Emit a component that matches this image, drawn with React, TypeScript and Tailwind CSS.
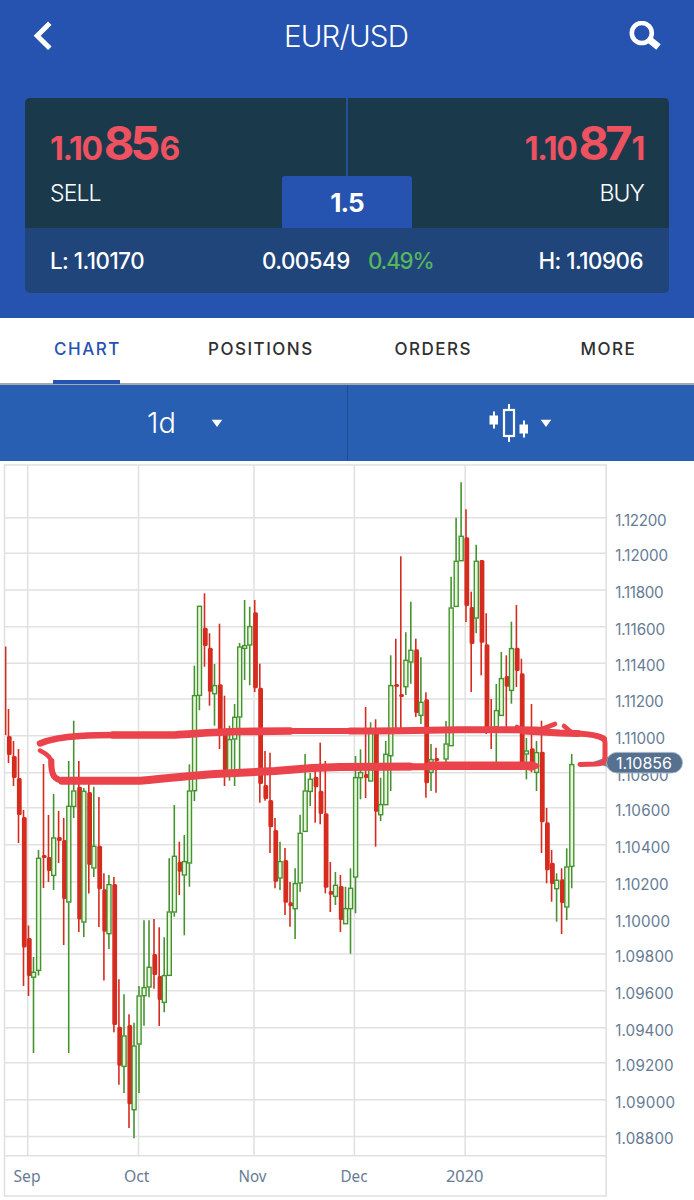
import React from "react";

type Candle = [x: number, high: number, top: number, bottom: number, low: number, up: 0 | 1];

const candles: Candle[] = [
  [8.5, 709, 736, 755, 763, 0], [13.5, 741, 756, 778, 786, 0], [18.5, 749, 778, 815, 843, 0],
  [23.5, 810, 817, 947.5, 986, 0], [28.5, 925.5, 938, 976, 996, 0], [33.5, 957, 972, 977.5, 1053, 1],
  [38.5, 850, 858, 970.7, 975.5, 1], [43.5, 764, 855, 858, 888, 0], [48.5, 815, 857, 871, 882, 0],
  [53.6, 794, 837.7, 875.7, 890, 1], [58.6, 811, 837, 841, 863, 0], [63.7, 818, 840, 899, 945, 0],
  [68.7, 761, 806, 902.3, 1053, 1], [73.7, 720.7, 790.7, 806.7, 818, 1], [78.8, 761, 786.7, 919.5, 932, 0],
  [83.8, 788, 791, 922.3, 937, 1], [88.8, 783, 792, 865, 893.5, 0], [93.8, 786.7, 846, 868.3, 877, 1],
  [98.9, 797, 845.7, 889.3, 927, 0], [103.9, 873.3, 889.3, 931.7, 980.5, 0], [108.9, 875, 884.3, 934, 949, 1],
  [113.9, 877, 884, 1025, 1032.3, 0], [118.9, 979.3, 1026.7, 1065.7, 1084.7, 0], [124, 994.3, 1035.7, 1066.7, 1093, 1],
  [129, 1014.3, 1025, 1104.3, 1128, 0], [134, 1022.7, 1045.7, 1110, 1138.3, 1], [139, 986, 995.7, 1044.3, 1093, 1],
  [144, 920.3, 987.3, 996, 1025.7, 1], [149, 920.3, 967, 987.3, 997.3, 1], [154, 919, 954, 975, 988.7, 0],
  [159.2, 927.3, 976, 1000, 1026, 0], [164.2, 937.3, 975.3, 1002.7, 1012.3, 1], [169.2, 858.3, 911.7, 975.7, 976, 1],
  [174.3, 805, 856, 912.3, 916.7, 1], [179.3, 841.7, 861.7, 871.7, 895, 0], [184.3, 835, 861.3, 875.3, 935.3, 1],
  [189.4, 764.3, 790.7, 863.3, 886.7, 1], [194.4, 665.7, 695.3, 791, 801, 1], [199.4, 606, 606, 695.7, 710.3, 1],
  [204.5, 593.3, 627.7, 646, 666.7, 0], [209.5, 633.3, 647.7, 691.7, 705.7, 0], [214.5, 664, 685.3, 694, 725.7, 1],
  [219.5, 623.7, 684.3, 735, 749, 0], [224.5, 695.7, 732, 772, 786, 0], [229.5, 725.7, 739.3, 772, 780.7, 1],
  [234.6, 704, 717, 739.3, 786, 1], [239.6, 643, 646.7, 717.3, 772, 1], [244.6, 600, 645.3, 648.7, 680, 1],
  [249.7, 606.7, 626.3, 645.3, 685.3, 1], [254.7, 600, 612.3, 688.3, 692, 0], [259.8, 663.7, 687.7, 784, 802.7, 0],
  [265, 751, 785, 799, 800.7, 0], [270, 752.7, 800, 827.3, 853, 0], [275, 818, 830, 881.7, 888.3, 0],
  [280, 841.7, 861.3, 878.3, 890, 1], [285, 848, 860, 902.7, 915, 0], [290, 882, 902.3, 906.3, 926.7, 0],
  [295.1, 868.3, 883.3, 909, 939, 1], [300.1, 814.7, 833, 883.3, 891.7, 1], [305.1, 754, 790.7, 831.7, 832, 1],
  [310.2, 773, 779, 791.7, 806, 1], [315.2, 770, 776.7, 787.3, 822.7, 0], [320.2, 742.7, 790.7, 814, 824.3, 0],
  [325.3, 761, 813.3, 887.7, 893.3, 0], [330.3, 862, 891, 894.7, 912, 0], [335.4, 872, 885, 896.7, 905, 1],
  [340.4, 875, 886, 920, 932, 0], [345.5, 886.7, 908.3, 924, 924, 1], [350.5, 868.3, 888, 909, 953.7, 1],
  [355.5, 756, 777.3, 877.3, 913.3, 1], [360.5, 749.3, 772.3, 778, 799.3, 1], [365.6, 707, 774, 778, 798, 0],
  [370.6, 722.3, 733, 781.3, 781.3, 1], [375.6, 719.3, 731.7, 811.7, 846.7, 0], [380.6, 777.7, 804.3, 815, 821, 1],
  [385.7, 741, 754, 805, 805, 1], [390.7, 655.3, 685.3, 756, 791, 1], [395.8, 638.7, 684, 687, 728, 0],
  [400.8, 556.3, 694, 697, 730, 0], [405.8, 632.3, 660, 687, 695, 1], [410.8, 601.7, 650, 662.3, 683.7, 1],
  [415.8, 638.7, 649.3, 713, 717, 0], [420.9, 657.3, 702, 715.7, 724, 1], [425.9, 692.3, 699.3, 783.3, 797.7, 0],
  [431, 744, 759.3, 772.7, 791, 1], [436, 747.7, 758, 761, 792.7, 0], [446, 721, 743.7, 759.3, 765, 1],
  [451.1, 576.7, 607.7, 746, 746, 1], [456.1, 517.7, 561, 606.7, 606.7, 1], [461.1, 482.3, 536, 561, 561, 1],
  [466, 509.3, 537.3, 606, 622, 0], [471.2, 591.7, 607, 644, 692, 0], [476.2, 544.7, 561, 618.3, 633.3, 1],
  [481.2, 560, 560, 642.7, 675.3, 0], [486.2, 613.3, 644.3, 730, 734, 0], [491.2, 699, 728, 732, 749, 0],
  [496.3, 684, 710.3, 727, 762, 1], [501.3, 652, 678.3, 715.7, 715.7, 1], [506.3, 655.3, 676, 686.7, 728, 0],
  [511.4, 621.7, 648.3, 690.7, 703.7, 1], [516.4, 605, 647.7, 671, 687, 0], [521.4, 658.7, 673.3, 764, 764, 0],
  [526.4, 738, 750.7, 754.3, 779.3, 1], [531.5, 704, 748.3, 766.7, 772.3, 0], [536.5, 741, 752.3, 772.7, 791, 1],
  [541.5, 720.7, 751.7, 822.3, 853, 0], [546.6, 808, 822.3, 870.3, 883.3, 0], [551.6, 850, 862.7, 884, 901.7, 0],
  [556.6, 873.3, 880, 889, 921.7, 1], [561.6, 868.3, 879.3, 903, 934, 0], [566.7, 848.3, 866.7, 907.3, 920, 1],
  [571.7, 754, 764.3, 866.7, 888.3, 1],
];

const priceLevels: { label: string; y: number; width: number }[] = [
  { label: "1.12200", y: 517.7, width: 51.5 },
  { label: "1.12000", y: 553.2, width: 53 },
  { label: "1.11800", y: 590, width: 48.5 },
  { label: "1.11600", y: 626.7, width: 50 },
  { label: "1.11400", y: 663.3, width: 50 },
  { label: "1.11200", y: 699, width: 48.5 },
  { label: "1.11000", y: 735.8, width: 50 },
  { label: "1.10800", y: 772.7, width: 53.5 },
  { label: "1.10600", y: 807.8, width: 55 },
  { label: "1.10400", y: 844.7, width: 55 },
  { label: "1.10200", y: 881.7, width: 53.5 },
  { label: "1.10000", y: 918.7, width: 55 },
  { label: "1.09800", y: 954, width: 58.5 },
  { label: "1.09600", y: 990.8, width: 58.5 },
  { label: "1.09400", y: 1027.7, width: 58.5 },
  { label: "1.09200", y: 1062.8, width: 58.5 },
  { label: "1.09000", y: 1099.7, width: 60 },
  { label: "1.08800", y: 1136.5, width: 58.5 },
];

const months: { label: string; x: number; tx: number; width: number }[] = [
  { label: "Sep", x: 27.7, tx: 13.5, width: 27 },
  { label: "Oct", x: 138.5, tx: 124, width: 25.5 },
  { label: "Nov", x: 254, tx: 238.5, width: 28 },
  { label: "Dec", x: 354.4, tx: 340.5, width: 27 },
  { label: "2020", x: 465.2, tx: 446, width: 37.5 },
];

function CandleMark({ c }: { c: Candle }) {
  const [x, high, top, bottom, low, up] = c;
  if (up) {
    return (
      <g stroke="#45932f" strokeWidth={1.6}>
        {high < top && <line x1={x} x2={x} y1={high} y2={top} />}
        <rect x={x - 1.9} y={top + 0.3} width={4} height={Math.max(bottom - top - 0.6, 1.5)} fill="#e6f7dc" strokeWidth={1.4} />
        {low > bottom && <line x1={x} x2={x} y1={bottom} y2={low} />}
      </g>
    );
  }
  return (
    <g fill="#d62c20">
      <rect x={x - 0.8} y={high} width={1.6} height={low - high} />
      <rect x={x - 1.6} y={top} width={4.8} height={bottom - top} rx={1.5} />
    </g>
  );
}

function Chart() {
  return (
    <svg className="block h-[739px] w-[694px]" viewBox="0 461 694 739" fontFamily="Inter, sans-serif">
      <g stroke="#e1e1e2" strokeWidth={1.6} fill="none">
        <rect x={4.5} y={465} width={601.7} height={731} />
        <line x1={4.5} x2={606.2} y1={1155.8} y2={1155.8} />
        {priceLevels.map((p) => (
          <line key={p.label} x1={4.5} x2={606.2} y1={p.y} y2={p.y} />
        ))}
        {months.map((m) => (
          <line key={m.label} x1={m.x} x2={m.x} y1={465} y2={1155.8} />
        ))}
      </g>
      <line x1={5.7} x2={5.7} y1={646.5} y2={735} stroke="#d62c20" strokeWidth={1.5} />
      {candles.map((c) => (
        <CandleMark key={c[0]} c={c} />
      ))}
      <g fill="#667b95" fontSize={15.2}>
        {priceLevels.map((p) => (
          <text key={p.label} x={615.2} y={p.y + 7.9} textLength={p.width}>
            {p.label}
          </text>
        ))}
      </g>
      <g fill="#667b95" fontSize={16.5} fontFamily="'Noto Sans', sans-serif">
        {months.map((m) => (
          <text key={m.label} x={m.tx} y={1181.7} textLength={m.width} lengthAdjust="spacingAndGlyphs">
            {m.label}
          </text>
        ))}
      </g>
      <path d="M593 762 L610 756 V768 Z" fill="#6f88a3" />
      <rect x={606.5} y={752.4} width={76} height={20.6} rx={10.3} fill="#56718f" stroke="#aab6c4" strokeWidth={1} />
      <text x={616} y={769} fontSize={16} fill="#fff" textLength={56}>
        1.10856
      </text>
      <g stroke="#ea434b" fill="none" strokeLinecap="round" strokeLinejoin="round">
        <path strokeWidth={6.5} d="M40 743.5 C48 740 62 737 80 736 C95 735 105 735 115 735" />
        <path strokeWidth={7.7} d="M113 735 H175 C195 734 210 732 240 731.5 L290 731" />
        <path strokeWidth={6.2} d="M288 731 H352" />
        <path strokeWidth={7} d="M350 731 C390 731 430 730.3 460 729.7 L500 729.7 L536 730 L543 730.5" />
        <path strokeWidth={4.6} d="M517 727 L524 731 M541 729.5 L555 724 M564 726 L571 732" />
        <path strokeWidth={7} d="M524 731 L560 733 L578 733.5" />
        <path strokeWidth={6} d="M576 733.5 C592 734 600 736 604 739" />
        <path strokeWidth={5} d="M596 736 C602 737 605 738 605 743 L605 756 C605 763 603 763.5 596 764 L580 764.5" />
        <path strokeWidth={4.5} d="M40 750.5 C47 754 51 757 51.5 762" />
        <path strokeWidth={6.2} d="M51.3 761 C51 775 54 780.2 64 780.7" />
        <path strokeWidth={8} d="M62 780.7 H140 C175 778 190 775.5 215 774 L275 771 L312 768 L340 767 L410 766.5" />
        <path strokeWidth={7} d="M350 766.7 H432" />
        <path strokeWidth={8.6} d="M430 765.7 L525 765.8 L533 766" />
        <path strokeWidth={5} d="M530 764 L537 766 L530 768" />
      </g>
    </svg>
  );
}

function Quote({ lead, pips, tail, side, right }: { lead: string; pips: string; tail: string; side: string; right?: boolean }) {
  return (
    <div className={right ? "flex flex-1 flex-col items-end pr-[25px]" : "flex flex-1 flex-col items-start pl-[25px]"}>
      <div className="mt-[16px] flex h-[58px] items-baseline font-bold leading-[58px] text-[#ee5160]">
        <span className="text-[32px] tracking-[-1.3px]">{lead}</span>
        <span className="ml-[2px] text-[47px] tracking-[-4px]">{pips}</span>
        <span className="ml-[3px] text-[32px] tracking-[-1.3px]">{tail}</span>
      </div>
      <div className="mt-[7px] text-[23px] font-light leading-[28px] tracking-[-0.9px] text-white">{side}</div>
    </div>
  );
}

function Caret() {
  return (
    <svg className="h-[9px] w-[12px]" viewBox="0 0 12 9">
      <path d="M0.7 0.7h10.6L6 8z" fill="#fff" />
    </svg>
  );
}

export default function App() {
  return (
    <div className="h-[1200px] w-[694px] overflow-hidden bg-white font-['Inter',sans-serif]">
      <header className="h-[318px] bg-[#2553af]">
        <div className="flex h-[98px] items-start justify-between pl-[33px] pr-[33px] pt-[20px]">
          <svg className="h-[31px] w-[20px]" viewBox="0 0 20 31">
            <path d="M16.8 3.3 L4.2 15.8 L16.8 28.3" fill="none" stroke="#fff" strokeWidth={5} />
          </svg>
          <h1 className="ml-[10px] text-[29.5px] font-light leading-[33px] tracking-[-0.8px] text-white">EUR/USD</h1>
          <svg className="mt-[1px] h-[29px] w-[32px]" viewBox="0 0 32 29">
            <circle cx={12.8} cy={12} r={10} fill="none" stroke="#fff" strokeWidth={4.6} />
            <path d="M19 17.5 L29.5 26" stroke="#fff" strokeWidth={7} />
          </svg>
        </div>
        <div className="mx-[25px] h-[195px] overflow-hidden rounded-[5px] bg-[#1f457b]">
          <div className="relative flex h-[130px] bg-[#1a3a4c]">
            <Quote lead="1.10" pips="85" tail="6" side="SELL" />
            <div className="w-[2px] bg-[#264f98]" />
            <Quote lead="1.10" pips="87" tail="1" side="BUY" right />
            <div className="absolute bottom-0 left-[257px] flex h-[52px] w-[130px] items-center justify-center rounded-t-[3px] bg-[#2553af] text-[26px] font-bold tracking-[-0.9px] text-white">
              1.5
            </div>
          </div>
          <div className="grid h-[65px] grid-cols-[212px_1fr_auto] items-center pl-[25px] pr-[26px] text-[22.3px] font-medium tracking-[-0.5px] text-white">
            <span>L: 1.10170</span>
            <span className="flex gap-[18px]">
              <span className="w-[88px]">0.00549</span>
              <span className="tracking-[-1.2px] text-[#56b55f]">0.49%</span>
            </span>
            <span>H: 1.10906</span>
          </div>
        </div>
      </header>

      <nav className="grid h-[67px] grid-cols-[155px_186.5px_186px_auto] items-start border-b-2 border-[#a6a8ae] pl-[53px] text-[17px] font-medium leading-[62px] tracking-[1.5px] text-[#2f2f31]">
        <span className="h-[66px] w-[67px] border-b-4 border-[#2553af] pl-px text-[#2553af]">CHART</span>
        <span>POSITIONS</span>
        <span>ORDERS</span>
        <span>MORE</span>
      </nav>

      <div className="flex h-[76px] bg-[#285fb3]">
        <div className="flex w-[348px] items-center border-r border-[#1d4c93] pl-[147px]">
          <span className="w-[64px] text-[29px] font-light leading-[76px] text-white">1d</span>
          <Caret />
        </div>
        <div className="flex flex-1 items-center pl-[141px]">
          <svg className="h-[40px] w-[40px]" viewBox="0 0 40 40">
            <g fill="#fff">
              <rect x={0.5} y={12.5} width={8.5} height={9} />
              <rect x={4} y={8.5} width={2} height={17} />
              <rect x={30.5} y={21.5} width={8.5} height={9} />
              <rect x={34} y={17.5} width={2} height={17} />
              <rect x={19} y={1} width={2} height={6} />
              <rect x={19} y={33} width={2} height={6} />
            </g>
            <rect x={15} y={7} width={10} height={26} fill="none" stroke="#fff" strokeWidth={2.2} />
          </svg>
          <div className="ml-[11px] flex">
            <Caret />
          </div>
        </div>
      </div>

      <Chart />
    </div>
  );
}
